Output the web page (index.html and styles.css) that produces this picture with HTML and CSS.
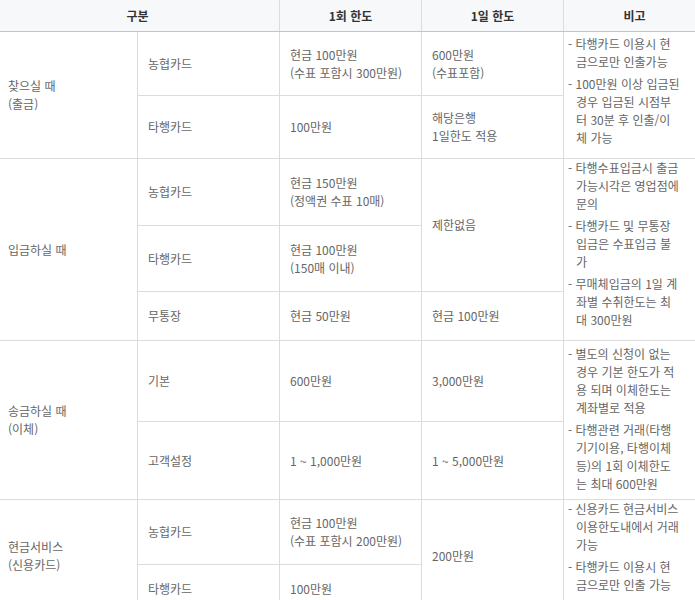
FILE: index.html
```html
<!DOCTYPE html>
<html lang="ko">
<head>
<meta charset="utf-8">
<title>거래한도</title>
<link rel="stylesheet" href="styles.css">
</head>
<body>
<div class="wrap">
<table class="limit">
  <colgroup><col><col><col><col><col></colgroup>
  <thead>
    <tr><th colspan="2">구분</th><th>1회 한도</th><th>1일 한도</th><th>비고</th></tr>
  </thead>
  <tbody>
    <tr class="r1">
      <td rowspan="2" class="grp">찾으실 때<br>(출금)</td>
      <td>농협카드</td>
      <td>현금 100만원<br>(수표 포함시 300만원)</td>
      <td>600만원<br>(수표포함)</td>
      <td rowspan="2" class="note g1"><ul>
        <li>- 타행카드 이용시 현<br>금으로만 인출가능</li>
        <li>- 100만원 이상 입금된<br>경우 입금된 시점부<br>터 30분 후 인출/이<br>체 가능</li>
      </ul></td>
    </tr>
    <tr class="r2">
      <td>타행카드</td>
      <td>100만원</td>
      <td>해당은행<br>1일한도 적용</td>
    </tr>
    <tr class="r3">
      <td rowspan="3" class="grp">입금하실 때</td>
      <td>농협카드</td>
      <td>현금 150만원<br>(정액권 수표 10매)</td>
      <td rowspan="2">제한없음</td>
      <td rowspan="3" class="note g2"><ul>
        <li>- 타행수표입금시 출금<br>가능시각은 영업점에<br>문의</li>
        <li>- 타행카드 및 무통장<br>입금은 수표입금 불<br>가</li>
        <li>- 무매체입금의 1일 계<br>좌별 수취한도는 최<br>대 300만원</li>
      </ul></td>
    </tr>
    <tr class="r4">
      <td>타행카드</td>
      <td>현금 100만원<br>(150매 이내)</td>
    </tr>
    <tr class="r5">
      <td>무통장</td>
      <td>현금 50만원</td>
      <td>현금 100만원</td>
    </tr>
    <tr class="r6">
      <td rowspan="2" class="grp">송금하실 때<br>(이체)</td>
      <td>기본</td>
      <td>600만원</td>
      <td>3,000만원</td>
      <td rowspan="2" class="note g3"><ul>
        <li>- 별도의 신청이 없는<br>경우 기본 한도가 적<br>용 되며 이체한도는<br>계좌별로 적용</li>
        <li>- 타행관련 거래(타행<br>기기이용, 타행이체<br>등)의 1회 이체한도<br>는 최대 600만원</li>
      </ul></td>
    </tr>
    <tr class="r7">
      <td>고객설정</td>
      <td>1 ~ 1,000만원</td>
      <td>1 ~ 5,000만원</td>
    </tr>
    <tr class="r8">
      <td rowspan="2" class="grp">현금서비스<br>(신용카드)</td>
      <td>농협카드</td>
      <td>현금 100만원<br>(수표 포함시 200만원)</td>
      <td rowspan="2">200만원</td>
      <td rowspan="2" class="note g4"><ul>
        <li>- 신용카드 현금서비스<br>이용한도내에서 거래<br>가능</li>
        <li>- 타행카드 이용시 현<br>금으로만 인출 가능</li>
      </ul></td>
    </tr>
    <tr class="r9">
      <td>타행카드</td>
      <td>100만원</td>
    </tr>
  </tbody>
</table>
</div>
</body>
</html>
```

FILE: styles.css
```css
html, body {
  margin: 0;
  padding: 0;
  background: #fff;
}

.wrap {
  width: 695px;
  height: 600px;
  overflow: hidden;
}

.limit {
  border-collapse: collapse;
  table-layout: fixed;
  width: 711px;
  margin-left: -5px;
  font-family: "Noto Sans CJK KR", "Noto Sans", sans-serif;
  font-size: 12px;
  line-height: 18px;
  color: #666;
}

.limit col {
  width: 142px;
}

.limit th {
  height: 31px;
  padding: 0;
  background: #f7f8fa;
  color: #333;
  font-weight: bold;
  text-align: center;
  border: 1px solid #dcdcdc;
  border-top: 0;
  border-bottom-color: #c4c4c4;
}

.limit td {
  padding: 0 10px;
  border: 1px solid #dcdcdc;
  vertical-align: middle;
  text-align: left;
  white-space: nowrap;
}

.limit td.grp {
  padding-left: 12px;
}

.limit td.note {
  padding: 0 4px;
  vertical-align: top;
}

.note ul {
  list-style: none;
  margin: 0;
  padding: 0;
}

.note li {
  padding-left: 8px;
  text-indent: -8px;
  margin-top: 4px;
}

.note li:first-child {
  margin-top: 0;
}

.g1 { padding-top: 3px !important; }
.g2 { padding-top: 0 !important; }
.g3 { padding-top: 4px !important; }
.g4 { padding-top: 0 !important; }

.r1 { height: 64px; }
.r2 { height: 63px; }
.r3 { height: 67px; }
.r4 { height: 66px; }
.r5 { height: 49px; }
.r6 { height: 81px; }
.r7 { height: 78px; }
.r8 { height: 65px; }
.r9 { height: 48px; }
```
